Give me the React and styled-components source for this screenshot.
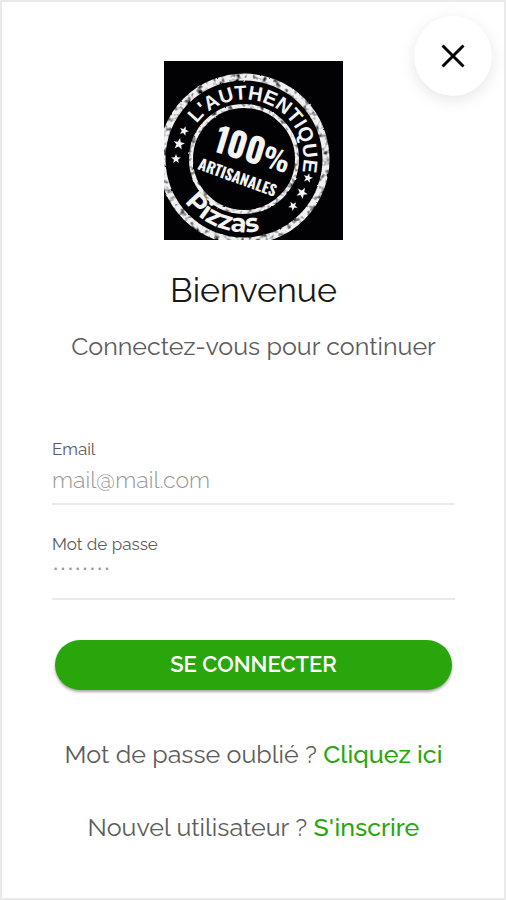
import React, { Component } from 'react';
import styled, { createGlobalStyle } from 'styled-components';

const colors = {
  white: '255, 255, 255',
  black: '0, 0, 0',
  dark: '24, 24, 24',
  grey: '92, 92, 92',
  placeholder: '150, 150, 150',
  line: '234, 234, 234',
  green: '41, 166, 11'
};

const GlobalStyle = createGlobalStyle`
  * {
    box-sizing: border-box;
  }
  body {
    margin: 0;
    background: rgb(${colors.white});
    font-family: Raleway, Lato, 'Open Sans', sans-serif;
    color: rgb(${colors.grey});
  }
`;

const SPage = styled.main`
  position: relative;
  display: flex;
  flex-direction: column;
  align-items: center;
  min-height: 100vh;
  padding: 59px 49px 40px 50px;
  border: 2px solid rgb(${colors.line});
`;

const SClose = styled.button`
  position: absolute;
  top: 14px;
  right: 12px;
  display: flex;
  justify-content: center;
  align-items: center;
  width: 78px;
  height: 80px;
  padding: 0;
  border: none;
  border-radius: 50%;
  cursor: pointer;
  color: rgb(${colors.black});
  background: rgb(${colors.white});
  box-shadow: 0 4px 16px 0 rgba(${colors.black}, 0.1);
`;

const SLogo = styled.svg`
  display: block;
  width: 179px;
  height: 179px;
`;

const STitle = styled.h1`
  margin: 28px 0 0;
  font-size: 34px;
  line-height: 44px;
  font-weight: 400;
  color: rgb(${colors.dark});
`;

const SSubtitle = styled.p`
  margin: 16px 0 0;
  font-size: 25px;
  line-height: 36px;
  font-weight: 400;
`;

const SForm = styled.form`
  display: flex;
  flex-direction: column;
  width: 100%;
  margin-top: 74px;
`;

const SField = styled.div`
  display: flex;
  flex-direction: column;
  height: 67px;
  margin-bottom: 28px;
  border-bottom: 2px solid rgb(${colors.line});
`;

const SLabel = styled.label`
  font-size: 17px;
  line-height: 22px;
`;

const SInput = styled.input`
  width: 100%;
  height: ${({ type }) => (type === 'password' ? '26px' : '38px')};
  padding: 0;
  border: none;
  outline: none;
  background: transparent;
  font-family: ${({ type }) =>
    type === 'password' ? "'Liberation Sans', sans-serif" : 'inherit'};
  font-size: ${({ type }) => (type === 'password' ? '22px' : '23px')};
  font-weight: ${({ type }) => (type === 'password' ? 400 : 300)};
  color: rgb(${colors.grey});
  &::placeholder {
    color: rgb(${colors.placeholder});
    opacity: 1;
  }
`;

const SSubmit = styled.button`
  height: 50px;
  margin: 12px 3px 0;
  border: none;
  border-radius: 25px;
  cursor: pointer;
  font-family: inherit;
  font-size: 22px;
  line-height: 48px;
  padding: 0 0 2px;
  font-weight: 600;
  color: rgb(${colors.white});
  background: rgb(${colors.green});
  box-shadow: 0 2px 3px 0 rgba(${colors.black}, 0.35);
`;

const SLinks = styled.div`
  display: flex;
  flex-direction: column;
  align-items: center;
  gap: 37px;
  margin-top: 46px;
`;

const SLine = styled.p`
  margin: 0;
  font-size: 25px;
  line-height: 36px;
  font-weight: 400;
  & a {
    font-weight: 500;
    text-decoration: none;
    color: rgb(${colors.green});
  }
`;

const stars = [
  { x: 20, y: 70, r: 5, a: 20 },
  { x: 15, y: 83, r: 6, a: 10 },
  { x: 12, y: 98, r: 5, a: 0 },
  { x: 144, y: 117, r: 5, a: 15 },
  { x: 138, y: 132, r: 6, a: 30 },
  { x: 129, y: 145, r: 5, a: 40 }
];

const starPoints = Array.from({ length: 10 }, (_, i) => {
  const r = i % 2 ? 0.42 : 1;
  const t = (Math.PI * i) / 5 - Math.PI / 2;
  return `${(r * Math.cos(t)).toFixed(3)},${(r * Math.sin(t)).toFixed(3)}`;
}).join(' ');

const narrow = "Oswald, 'Bebas Neue', 'Roboto Condensed', 'Open Sans Condensed', Lato, sans-serif";

const Logo = () => (
  <SLogo viewBox="0 0 179 179" role="img" aria-label="Pizzas">
    <defs>
      <path id="arc-top" d="M36.6 136.9 A59 59 0 1 1 119.9 141.5" />
      <path id="arc-bottom" d="M12 125 A74 74 0 0 0 146 132" />
      {/* uneven ink on the stamp rings */}
      <filter id="worn" x="-10%" y="-10%" width="120%" height="120%">
        <feTurbulence type="fractalNoise" baseFrequency="0.18" numOctaves="2" seed="4" result="noise" />
        <feDisplacementMap
          in="SourceGraphic"
          in2="noise"
          scale="2"
          xChannelSelector="R"
          yChannelSelector="G"
          result="rough"
        />
        <feColorMatrix
          in="noise"
          values="0 0 0 0 1  0 0 0 0 1  0 0 0 0 1  0 -2.5 0 0 2.2"
          result="mask"
        />
        <feComposite in="rough" in2="mask" operator="in" />
      </filter>
    </defs>
    <rect width="179" height="179" fill="#020205" />
    <g filter="url(#worn)" fill="none" stroke="#f0f0f0">
      <circle cx="80" cy="98" r="82" strokeWidth="7" />
      <circle cx="80" cy="98" r="53" strokeWidth="4" />
    </g>
    <g fill="#f4f4f4">
      <text fontFamily="'Liberation Sans', sans-serif" fontWeight="700" fontSize="20">
        <textPath href="#arc-top" startOffset="80">
          L'AUTHENTIQUE
        </textPath>
      </text>
      <text fontFamily="Montserrat, 'DejaVu Sans', sans-serif" fontWeight="700" fontSize="26">
        <textPath href="#arc-bottom" startOffset="18">
          Pizzas
        </textPath>
      </text>
      <g fontFamily={narrow} fontWeight="700">
        <text x="48" y="90" fontSize="34" transform="rotate(17 48 90)">
          100
          <tspan fontSize="27">%</tspan>
        </text>
        <text x="33" y="108" fontSize="15" transform="rotate(20 33 108)">
          ARTISANALES
        </text>
      </g>
      {stars.map(({ x, y, r, a }) => (
        <polygon
          key={y}
          points={starPoints}
          transform={`translate(${x} ${y}) rotate(${a}) scale(${r})`}
        />
      ))}
    </g>
  </SLogo>
);

class App extends Component {
  state = {
    email: '',
    password: ''
  };
  onChange = e => this.setState({ [e.target.name]: e.target.value });
  onSubmit = e => e.preventDefault();
  render = () => (
    <SPage>
      <GlobalStyle />
      <SClose type="button" aria-label="Fermer">
        <svg width="24" height="24" viewBox="0 0 24 24" stroke="currentColor">
          <path d="M1.5 1.5 22.5 22.5 M22.5 1.5 1.5 22.5" strokeWidth="3" />
        </svg>
      </SClose>
      <Logo />
      <STitle>Bienvenue</STitle>
      <SSubtitle>Connectez-vous pour continuer</SSubtitle>
      <SForm onSubmit={this.onSubmit}>
        <SField>
          <SLabel htmlFor="email">Email</SLabel>
          <SInput
            id="email"
            name="email"
            type="email"
            placeholder="mail@mail.com"
            value={this.state.email}
            onChange={this.onChange}
          />
        </SField>
        <SField>
          <SLabel htmlFor="password">Mot de passe</SLabel>
          <SInput
            id="password"
            name="password"
            type="password"
            placeholder="········"
            value={this.state.password}
            onChange={this.onChange}
          />
        </SField>
        <SSubmit type="submit">SE CONNECTER</SSubmit>
      </SForm>
      <SLinks>
        <SLine>
          Mot de passe oublié ? <a href="#reset">Cliquez ici</a>
        </SLine>
        <SLine>
          Nouvel utilisateur ? <a href="#signup">S'inscrire</a>
        </SLine>
      </SLinks>
    </SPage>
  );
}

export default App;
